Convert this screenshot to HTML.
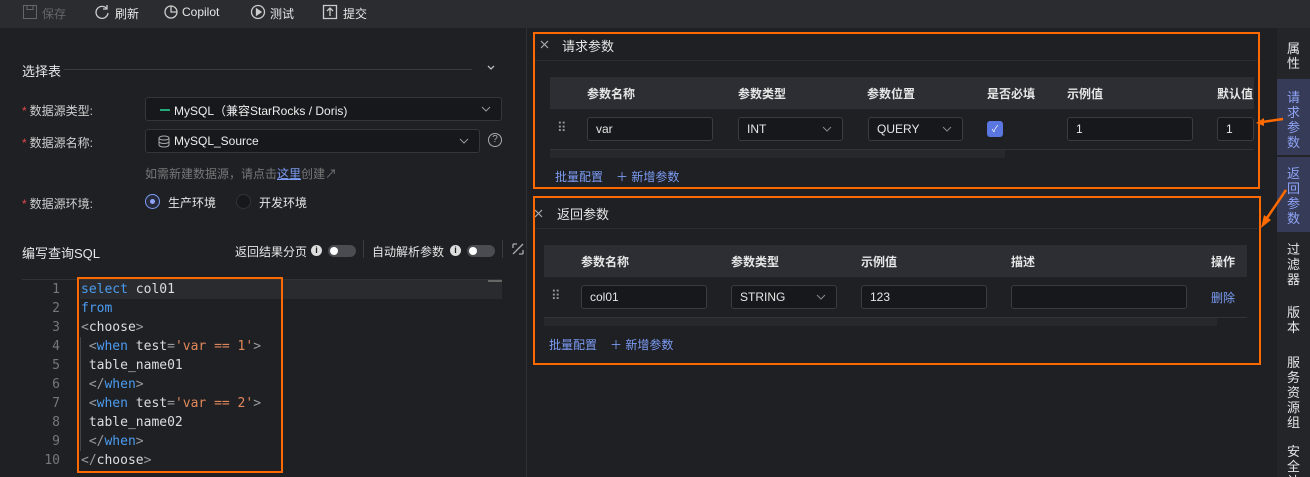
<!DOCTYPE html>
<html><head><meta charset="utf-8"><style>
*{box-sizing:border-box;margin:0;padding:0}
html,body{width:1310px;height:477px;overflow:hidden}
body{background:#1f2024;font-family:"Liberation Sans","Noto Sans CJK SC",sans-serif;color:#e6e6e6;font-size:12px;position:relative}
.a{position:absolute}
.tb{left:0;top:0;width:1310px;height:28px;background:#2b2c30}
.tb span{position:absolute;top:5px;font-size:12px;color:#e6e6e6}
.tb svg{position:absolute;top:4px}
.sel{background:#17181b;border:1px solid #34363b;border-radius:3px}
.lbl{font-size:12px;color:#d0d0d0}
.lbl b{color:#e5484d;font-weight:normal;margin-right:3px}
.mono{font-family:"DejaVu Sans Mono","Liberation Mono",monospace;font-size:13px;line-height:19px;white-space:pre}
.kw{color:#4b9cf0}.s{color:#e0885b}.g{color:#9a9a9a}
.box{border:2px solid #ff6a00}
.th{background:#2c2e33;font-weight:bold;font-size:12px;color:#e6e6e6}
.inp{background:#17181b;border:1px solid #3a3c42;border-radius:3px;font-size:12px;color:#e6e6e6;padding-left:8px;line-height:22px}
.lnk{color:#7c9cf5;font-size:12px}
.side{left:1277px;top:28px;width:33px;height:449px;background:#242529}
.tab{position:absolute;left:1277px;width:33px;font-size:13px;color:#e6e6e6;text-align:center;line-height:15px}
.act{background:#363c57;color:#8fa3f7}
.tog{width:28px;height:12px;border-radius:6px;background:#4a4c52}
.tog i{position:absolute;left:2px;top:2px;width:8px;height:8px;border-radius:4px;background:#fff}
.info{width:11px;height:11px;border-radius:6px;background:#ddd;color:#222;font-size:9px;text-align:center;line-height:11px;font-weight:bold}
.chev{position:absolute;right:10px;top:8px}
</style></head><body>
<div class="a tb">
<svg style="left:22px" width="16" height="16" fill="none" stroke="#666"><rect x="1.5" y="1.5" width="13" height="13"/><path d="M5 1.5v4h6v-4"/></svg><span style="left:42px;color:#666">保存</span>
<svg style="left:94px" width="16" height="16" fill="none" stroke="#ccc" stroke-width="1.3"><path d="M13 5A6 6 0 1 0 14 9"/><path d="M13 1v4h-4"/></svg><span style="left:115px">刷新</span>
<svg style="left:163px" width="16" height="16" fill="none" stroke="#ccc" stroke-width="1.3"><circle cx="8" cy="8" r="6"/><path d="M8 2v6h6"/></svg><span style="left:182px">Copilot</span>
<svg style="left:250px" width="16" height="16" fill="none" stroke="#ccc" stroke-width="1.3"><circle cx="8" cy="8" r="6.5"/><path d="M6.5 5v6l4.5-3z" fill="#ccc"/></svg><span style="left:270px">测试</span>
<svg style="left:322px" width="16" height="16" fill="none" stroke="#ccc" stroke-width="1.3"><path d="M1.5 1.5h13v13h-13z"/><path d="M8 12V4M5 7l3-3 3 3"/></svg><span style="left:343px">提交</span>
</div>
<div class="a" style="left:526px;top:28px;width:1px;height:449px;background:#2f3035"></div>
<div class="a" style="left:22px;top:61px;font-size:13px">选择表</div>
<div class="a" style="left:64px;top:69px;width:408px;height:1px;background:#3a3b40"></div>
<svg class="a" style="left:487px;top:65px" width="8" height="6" fill="none" stroke="#bbb" stroke-width="1.3"><path d="M1 1l3 3 3-3"/></svg>
<div class="a lbl" style="left:22px;top:102px"><b>*</b>数据源类型:</div>
<div class="a sel" style="left:145px;top:97px;width:357px;height:24px"><span class="a" style="left:28px;top:4px;color:#eee">MySQL（兼容StarRocks / Doris)</span><span class="a" style="left:14px;top:11px;width:10px;height:2px;background:#2a7"></span><svg class="chev" width="10" height="6" fill="none" stroke="#999"><path d="M1 1l4 4 4-4"/></svg></div>
<div class="a lbl" style="left:22px;top:134px"><b>*</b>数据源名称:</div>
<div class="a sel" style="left:145px;top:129px;width:335px;height:24px"><svg class="a" style="left:12px;top:5px" width="12" height="13" fill="none" stroke="#aaa"><ellipse cx="6" cy="3" rx="5" ry="2"/><path d="M1 3v7c0 1 2 2 5 2s5-1 5-2V3M1 6.5c0 1 2 2 5 2s5-1 5-2"/></svg><span class="a" style="left:28px;top:4px;color:#eee">MySQL_Source</span><svg class="chev" width="10" height="6" fill="none" stroke="#999"><path d="M1 1l4 4 4-4"/></svg></div>
<div class="a" style="left:488px;top:133px;width:14px;height:14px;border:1px solid #aaa;border-radius:7px;font-size:10px;text-align:center;line-height:12px;color:#aaa">?</div>
<div class="a" style="left:145px;top:165px;color:#777">如需新建数据源，请点击<span style="color:#7c9cf5;text-decoration:underline">这里</span>创建↗</div>
<div class="a lbl" style="left:22px;top:195px"><b>*</b>数据源环境:</div>
<div class="a" style="left:145px;top:194px;width:15px;height:15px;border-radius:8px;border:1px solid #7c9cf5;background:#26293a"><i class="a" style="left:4px;top:4px;width:5px;height:5px;border-radius:3px;background:#8fa3f7"></i></div>
<div class="a" style="left:168px;top:194px">生产环境</div>
<div class="a" style="left:236px;top:194px;width:15px;height:15px;border-radius:8px;background:#17181b;border:1px solid #333"></div>
<div class="a" style="left:259px;top:194px">开发环境</div>
<div class="a" style="left:22px;top:243px;font-size:13px">编写查询SQL</div>
<div class="a" style="left:235px;top:243px">返回结果分页</div>
<div class="a info" style="left:311px;top:245px">i</div>
<div class="a tog" style="left:328px;top:245px"><i></i></div>
<div class="a" style="left:363px;top:240px;width:1px;height:18px;background:#3a3b40"></div>
<div class="a" style="left:372px;top:243px">自动解析参数</div>
<div class="a info" style="left:450px;top:245px">i</div>
<div class="a tog" style="left:467px;top:245px"><i></i></div>
<div class="a" style="left:502px;top:240px;width:1px;height:18px;background:#3a3b40"></div>
<svg class="a" style="left:512px;top:243px" width="12" height="12" fill="none" stroke="#aaa" stroke-width="1.3"><path d="M1 11L11 1M1 1h4M1 1v4M11 11h-4M11 11v-4"/></svg>
<div class="a" style="left:22px;top:279px;width:480px;height:1px;background:#333"></div>
<div class="a" style="left:80px;top:280px;width:422px;height:19px;background:#2a2b2f"></div>
<div class="a" style="left:488px;top:280px;width:14px;height:2px;background:#666"></div>
<div class="a mono g" style="left:30px;top:280px;width:30px;text-align:right;color:#777"> 1
 2
 3
 4
 5
 6
 7
 8
 9
10</div>
<div class="a" style="left:80px;top:337px;width:1px;height:114px;background:#444"></div>
<div class="a mono" style="left:81px;top:280px;color:#ddd"><span class="kw">select</span> col01
<span class="kw">from</span>
<span class="g">&lt;</span>choose<span class="g">&gt;</span>
 <span class="g">&lt;</span><span class="kw">when</span> test<span class="g">=</span><span class="s">'var == 1'</span><span class="g">&gt;</span>
 table_name01
 <span class="g">&lt;/</span><span class="kw">when</span><span class="g">&gt;</span>
 <span class="g">&lt;</span><span class="kw">when</span> test<span class="g">=</span><span class="s">'var == 2'</span><span class="g">&gt;</span>
 table_name02
 <span class="g">&lt;/</span><span class="kw">when</span><span class="g">&gt;</span>
<span class="g">&lt;/</span>choose<span class="g">&gt;</span></div>
<div class="a box" style="left:77px;top:277px;width:206px;height:196px"></div>

<!-- request -->
<div class="a" style="left:533px;top:60px;width:724px;height:1px;background:#2c2d32"></div>
<svg class="a" style="left:540px;top:40px" width="9" height="9" stroke="#aaa" stroke-width="1.2"><path d="M1 1l7 7M8 1l-7 7"/></svg>
<div class="a" style="left:562px;top:36px;font-size:13px">请求参数</div>
<div class="a th" style="left:550px;top:77px;width:704px;height:32px"><span class="a" style="left:37px;top:8px">参数名称</span><span class="a" style="left:188px;top:8px">参数类型</span><span class="a" style="left:317px;top:8px">参数位置</span><span class="a" style="left:437px;top:8px">是否必填</span><span class="a" style="left:517px;top:8px">示例值</span><span class="a" style="left:667px;top:8px">默认值</span></div>
<div class="a g" style="left:557px;top:120px;font-size:13px">⠿</div>
<div class="a inp" style="left:587px;top:117px;width:126px;height:24px">var</div>
<div class="a inp" style="left:738px;top:117px;width:105px;height:24px">INT<svg class="chev" width="10" height="6" fill="none" stroke="#888"><path d="M1 1l4 4 4-4"/></svg></div>
<div class="a inp" style="left:868px;top:117px;width:95px;height:24px">QUERY<svg class="chev" width="10" height="6" fill="none" stroke="#888"><path d="M1 1l4 4 4-4"/></svg></div>
<div class="a" style="left:987px;top:121px;width:16px;height:16px;border-radius:3px;background:#5a76e0;color:#fff;font-size:9px;text-align:center;line-height:16px">✓</div>
<div class="a inp" style="left:1067px;top:117px;width:126px;height:24px">1</div>
<div class="a inp" style="left:1217px;top:117px;width:37px;height:24px">1</div>
<div class="a" style="left:550px;top:149px;width:704px;height:1px;background:#333"></div>
<div class="a" style="left:550px;top:150px;width:455px;height:8px;background:#27282c"></div>
<div class="a lnk" style="left:555px;top:168px">批量配置</div>
<div class="a lnk" style="left:616px;top:168px">＋ 新增参数</div>
<div class="a box" style="left:533px;top:32px;width:727px;height:157px"></div>

<!-- response -->
<div class="a" style="left:534px;top:228px;width:724px;height:1px;background:#2c2d32"></div>
<svg class="a" style="left:534px;top:209px" width="9" height="9" stroke="#aaa" stroke-width="1.2"><path d="M1 1l7 7M8 1l-7 7"/></svg>
<div class="a" style="left:557px;top:204px;font-size:13px">返回参数</div>
<div class="a th" style="left:544px;top:245px;width:703px;height:32px"><span class="a" style="left:37px;top:8px">参数名称</span><span class="a" style="left:187px;top:8px">参数类型</span><span class="a" style="left:317px;top:8px">示例值</span><span class="a" style="left:467px;top:8px">描述</span><span class="a" style="left:667px;top:8px">操作</span></div>
<div class="a g" style="left:551px;top:288px;font-size:13px">⠿</div>
<div class="a inp" style="left:581px;top:285px;width:126px;height:24px">col01</div>
<div class="a inp" style="left:731px;top:285px;width:106px;height:24px">STRING<svg class="chev" width="10" height="6" fill="none" stroke="#888"><path d="M1 1l4 4 4-4"/></svg></div>
<div class="a inp" style="left:861px;top:285px;width:126px;height:24px">123</div>
<div class="a inp" style="left:1011px;top:285px;width:176px;height:24px"></div>
<div class="a lnk" style="left:1211px;top:289px">删除</div>
<div class="a" style="left:544px;top:317px;width:703px;height:1px;background:#333"></div>
<div class="a" style="left:544px;top:318px;width:673px;height:8px;background:#27282c"></div>
<div class="a lnk" style="left:549px;top:336px">批量配置</div>
<div class="a lnk" style="left:610px;top:336px">＋ 新增参数</div>
<div class="a box" style="left:533px;top:196px;width:728px;height:169px"></div>

<!-- sidebar -->
<div class="a side"></div>
<div class="tab" style="top:41px">属<br>性</div>
<div class="tab act" style="top:79px;height:76px;padding-top:11px">请<br>求<br>参<br>数</div>
<div class="tab act" style="top:157px;height:75px;padding-top:9px">返<br>回<br>参<br>数</div>
<div class="tab" style="top:242px">过<br>滤<br>器</div>
<div class="tab" style="top:305px">版<br>本</div>
<div class="tab" style="top:355px">服<br>务<br>资<br>源<br>组</div>
<div class="tab" style="top:444px">安<br>全<br>认</div>
<svg class="a" style="left:1250px;top:110px" width="40" height="130"><path d="M33 9 L12 12" stroke="#ff6a00" stroke-width="2.5"/><path d="M6 13 L14 8 L14 16Z" fill="#ff6a00"/><path d="M36 80 L17 108" stroke="#ff6a00" stroke-width="2.5"/><path d="M11 118 L14 105 L21 110Z" fill="#ff6a00"/></svg>
</body></html>
